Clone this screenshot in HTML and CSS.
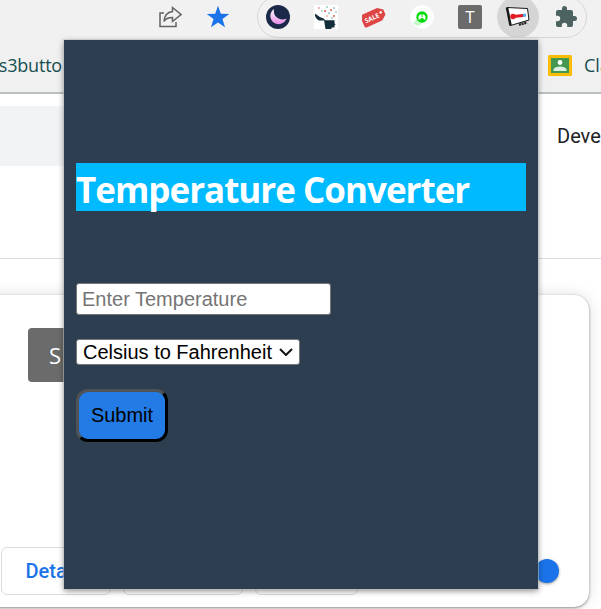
FILE: index.html
```html
<!DOCTYPE html>
<html lang="en">
<head>
<meta charset="utf-8">
<title>Temperature Converter</title>
<link rel="stylesheet" href="styles.css">
</head>
<body>
<div class="browser">
  <header class="toolbar">
    <svg class="share" width="24" height="24" viewBox="0 0 24 24" fill="none" stroke="#626366" stroke-width="1.5"><path d="M6 7H2V20.500H18V16"/><path d="M14.500 1.500L23 8.500L14.500 15.500V11.500Q8 11.500 6 15.500Q6.500 6.500 14.500 5.500Z"/></svg>
    <svg class="star" width="24" height="24" viewBox="0 0 24 24" fill="#1a73e8"><path d="M12 .8L14.800 8.700L23.200 9L16.500 14L19 22.300L12 17.500L5 22.300L7.500 14L.8 9L9.200 8.700Z"/></svg>
    <div class="extensions">
      <svg width="24" height="24" viewBox="0 0 24 24"><defs><linearGradient id="moon" x2="0" y2="1"><stop stop-color="#fff"/><stop offset="1" stop-color="#e58be5"/></linearGradient></defs><circle cx="12" cy="12" r="12" fill="#1b2848"/><path d="M8 4A8.300 8.300 0 1 0 20.500 13.500C14 16.500 6.500 11.500 8 4Z" fill="url(#moon)"/></svg>
      <svg width="24" height="24" viewBox="0 0 24 24"><path fill="#fff" d="M0 0H24V24H0Z"/><path fill="#142d3b" d="M1 8.500Q5 12 9.500 13.500Q11.500 14.200 10.500 15.300L5 15.500Q.5 13 1 8.500ZM10 15.300H20.500V18L21.500 20H20.500V22.500H17.500V24H11.500Z"/><g fill="#db6049"><circle cx="5" cy="3" r=".8"/><circle cx="11" cy="6" r="1"/><circle cx="17" cy="5" r="1"/><circle cx="20" cy="11" r="1"/><circle cx="13" cy="11" r=".7"/></g><g fill="#57a39b"><circle cx="8" cy="6" r=".7"/><circle cx="13" cy="2" r=".8"/><circle cx="20" cy="3" r=".8"/><circle cx="15" cy="8" r=".8"/><circle cx="18" cy="13" r=".8"/><circle cx="22" cy="7" r=".8"/></g></svg>
      <svg width="24" height="24" viewBox="0 0 24 24"><g transform="rotate(-24 12 12)"><path fill="#df4545" d="M1 5H18.500L23.500 9V14.500L18 18.500H1Q-.5 18.500-.5 17V6.500Q-.5 5 1 5Z"/><circle cx="20" cy="10.500" r="1.300" fill="#fff"/><text class="sale" x="2" y="14.500">SALE</text></g></svg>
      <svg width="24" height="24" viewBox="0 0 24 24"><circle cx="12" cy="12" r="11.700" fill="#fff"/><path fill="#c9f6c8" d="M7 14L3 18Q6 22 10 20L15 16Z"/><circle cx="12" cy="12" r="5.700" fill="#05db0b"/><path fill="#fff" d="M8.500 14.500V11.500L10 9.500H14L15.500 11.500V14.500H14L13 13H11L10 14.500Z"/><path fill="#05db0b" d="M11.500 9.500H12.500V12H11.500Z"/></svg>
      <span class="letter">T</span>
      <span class="active"><svg width="26" height="24" viewBox="0 0 26 24"><path fill="#fff" stroke="#171717" stroke-width="1" d="M2 2.500L22.500 3.500L24 15L5.500 20.500Z"/><path stroke="#171717" stroke-width="2.500" fill="none" d="M2 2.500L5.500 20.500"/><path d="M14 19.700L22 17.500" stroke="#222" stroke-width="2.500" stroke-dasharray="2 .7"/><path d="M8 11.500L18 10.500" stroke="#e21c22" stroke-width="3" stroke-linecap="round"/><circle cx="8" cy="11.500" r="2.700" fill="#e21c22"/><path d="M18 10.500L21 10" stroke="#55a8e8" stroke-width="3"/></svg></span>
      <svg class="puzzle" width="24" height="24" viewBox="0 0 24 24" fill="#4d6361"><path d="M20.500 11H19V7c0-1.100-.9-2-2-2h-4V3.500a2.500 2.500 0 0 0-5 0V5H4c-1.100 0-2 .9-2 2v3.800h1.500a2.700 2.700 0 0 1 0 5.400H2V20c0 1.100.9 2 2 2h3.800v-1.500a2.700 2.700 0 0 1 5.400 0V22H17c1.100 0 2-.9 2-2v-4h1.500a2.500 2.500 0 0 0 0-5z"/></svg>
    </div>
  </header>
  <nav class="bookmarks">
    <span class="bookmark-left">ss3butto</span>
    <span class="bookmark-right"><svg width="24" height="21" viewBox="0 0 24 21"><rect width="24" height="21" rx="1.500" fill="#fbbc04"/><path fill="#43974f" d="M3 3H21V18H3Z"/><circle cx="12" cy="7.500" r="2.400" fill="#fff"/><path fill="#dcefe0" d="M5.500 16V14Q7 11.500 12 11.500T18.500 14V16Z"/></svg><span>Cla</span></span>
  </nav>
  <main class="page">
    <div class="page-header"><div class="search"></div><span class="developer">Deve</span></div>
    <section class="card">
      <div class="tile">S</div>
      <div class="actions"><span class="action details">Details</span><span class="action remove"></span><span class="action errors"></span><i class="toggle"></i></div>
    </section>
  </main>
  <section class="popup">
    <h1>Temperature Converter</h1>
    <input class="temperature" type="text" placeholder="Enter Temperature">
    <div class="choice"><select><option>Celsius to Fahrenheit</option></select><svg width="14" height="8" viewBox="0 0 14 8" fill="none" stroke="#111" stroke-width="2"><path d="M1 1L7 7L13 1"/></svg></div>
    <button type="button">Submit</button>
  </section>
</div>
</body>
</html>
```
FILE: styles.css
```css
* { box-sizing: border-box; }
body { margin: 0; overflow: hidden; }
.browser { position: relative; width: 601px; height: 609px; overflow: hidden; background: #fff; }
.toolbar { height: 38px; display: flex; align-items: flex-start; padding-left: 158px; background: #f1f1f1; }
.share { margin-top: 6px; }
.star { margin: 5px 0 0 24px; }
.extensions { flex: none; display: flex; align-items: center; gap: 24px; width: 330px; height: 42px; margin: -4px 0 0 27px; padding-left: 8px; border: 1.5px solid #d5d6d6; border-radius: 21px; }
.extensions svg, .letter { flex: none; }
.sale { font: bold 6.5px "Open Sans", sans-serif; fill: #fff; }
.letter { width: 24px; height: 24px; border-radius: 2px; background: #6b6b6b; color: #fff; font: 17px/24px "Open Sans", sans-serif; text-align: center; }
.active { flex: none; width: 42px; height: 42px; margin: 0 -9px; border-radius: 50%; background: #d5d5d5; display: grid; place-items: center; }
.bookmarks { height: 56px; display: flex; align-items: center; justify-content: space-between; background: #f0f0f0; border-bottom: 2px solid #b9c0bf; font: 18px "Open Sans", sans-serif; color: #174e50; }
.bookmark-left { display: flex; justify-content: flex-end; width: 62px; height: 25px; line-height: 25px; letter-spacing: -.2px; white-space: nowrap; }
.bookmark-right { flex: none; width: 53px; height: 25px; display: flex; align-items: center; gap: 12px; line-height: 25px; }
.bookmark-right svg { flex: none; }
.page { height: 515px; }
.page-header { height: 165px; display: flex; justify-content: space-between; padding-top: 12px; border-bottom: 1px solid #dadce0; }
.search { width: 100px; height: 60px; background: #f1f3f4; }
.developer { width: 44px; margin-top: 18px; color: #202124; font: 20px/24px Roboto, sans-serif; }
.card { width: 617px; height: 312px; margin: 36px 0 0 -28px; padding: 33px 0 0 56px; border-radius: 15px; background: #fff; box-shadow: 0 1px 3px #8c8c8c, 0 0 16px rgba(0,0,0,.12); }
.tile { width: 55px; height: 54px; padding-left: 21px; border-radius: 4px; background: #6b6b6b; color: #fff; font: 22px/54px "Open Sans", sans-serif; }
.actions { display: flex; align-items: center; gap: 12px; margin: 165px 0 0 -27px; }
.action { height: 48px; border: 1px solid #dadce0; border-radius: 6px; }
.details { width: 110px; padding-left: 23.5px; color: #1a73e8; font: 500 20px/46px Roboto, sans-serif; }
.remove { width: 120px; }
.errors { width: 103px; }
.toggle { width: 24px; height: 24px; margin-left: 165px; border-radius: 50%; background: #1a73e8; box-shadow: 0 1px 3px rgba(0,0,0,.4); }
.popup { position: absolute; left: 64px; top: 40px; width: 474px; height: 549px; padding: 123px 12px 0; background: #2d3e50; box-shadow: 0 0 0 1px rgba(190,195,194,.55), 0 2px 6px rgba(0,0,0,.45); display: flex; flex-direction: column; align-items: flex-start; }
h1 { width: 450px; height: 48px; margin: 0 0 72px; background: #00baff; color: #fff; font: bold 35px/53px "Open Sans", sans-serif; letter-spacing: -1px; white-space: nowrap; }
.temperature { width: 255px; height: 32px; padding: 1px 5px; border: 1px solid #767676; border-radius: 3px; outline: 0; background: #fff; font: 20px "Liberation Sans", sans-serif; }
.temperature::placeholder { color: #757575; opacity: 1; }
.choice { display: flex; align-items: center; width: 224px; height: 26px; margin-top: 24px; border: 1px solid #767676; border-radius: 3px; background: #fff; }
.choice select { width: 202px; height: 24px; padding: 0 0 0 6px; border: 0; background: transparent; appearance: none; color: #000; font: 20px/24px "Liberation Sans", sans-serif; }
button { width: 92px; height: 53px; margin-top: 24px; padding: 0; border: 3px outset #000; border-color: #505356 #000 #000 #505356; border-radius: 12px; background: #237be5; color: #000; font: 20px "Liberation Sans", sans-serif; }
```
